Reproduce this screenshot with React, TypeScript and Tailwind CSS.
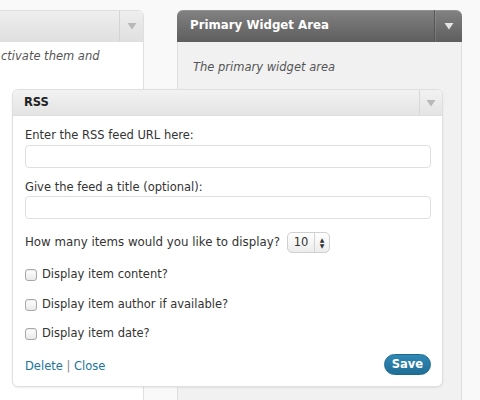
import React from "react";

function Arrow({ light }: { light?: boolean }) {
  return (
    <svg width="10" height="8" viewBox="0 0 10 8" className="block">
      <path d="M0.5 1 L9.5 1 L5 7.5 Z" fill={light ? "#e4e4e4" : "#b8b8b8"} />
    </svg>
  );
}

function Check({ label }: { label: string }) {
  return (
    <div className="flex h-[16px] items-center gap-[5px]">
      <span className="block h-[12px] w-[12px] rounded-[3px] border border-[#a9a9a9] bg-gradient-to-b from-white to-[#e9e9e9] shadow-[inset_0_1px_1px_rgba(0,0,0,0.08)]" />
      <span>{label}</span>
    </div>
  );
}

export default function App() {
  return (
    <div
      className="relative h-[400px] w-[480px] overflow-hidden bg-[#f9f9f9] text-[11.5px] text-[#333]"
      style={{ fontFamily: '"DejaVu Sans", "Liberation Sans", sans-serif' }}
    >
      <div className="flex pt-[10px]">
        {/* available widgets column (cut off on the left) */}
        <div className="-ml-[20px] flex h-[400px] w-[164px] flex-col rounded-tr-[6px] border border-[#dfdfdf] bg-white">
          <div className="flex h-[31px] items-stretch rounded-tr-[6px] border-b border-[#dfdfdf] bg-gradient-to-b from-[#eeeeee] to-[#e0e0e0]">
            <div className="flex-1" />
            <div className="flex w-[24px] items-center justify-center border-l border-[#d4d4d4]">
              <Arrow />
            </div>
          </div>
          <p className="pl-[20px] pt-[6px] italic leading-[16px] text-[#555]">ctivate them and</p>
        </div>

        {/* primary widget area */}
        <div className="ml-[33px] flex h-[400px] w-[285px] flex-col rounded-t-[6px] border border-[#dfdfdf] bg-[#f1f1f1]">
          <div className="-mx-px -mt-px flex h-[32px] items-stretch rounded-t-[6px] bg-gradient-to-b from-[#828282] to-[#5e5e5e] shadow-[inset_0_1px_0_rgba(255,255,255,0.15)]">
            <div className="flex flex-1 items-center pl-[13px] text-[11.8px] font-bold text-white">Primary Widget Area</div>
            <div className="flex w-[28px] items-center justify-center border-l border-[#555] shadow-[inset_1px_0_0_rgba(255,255,255,0.12)]">
              <Arrow light />
            </div>
          </div>
          <p className="pl-[15px] pt-[17px] italic leading-[16px] text-[#555]">The primary widget area</p>
        </div>
      </div>

      {/* RSS widget being dragged */}
      <div className="absolute left-[12px] top-[89px] flex h-[298px] w-[431px] flex-col rounded-[6px] border border-[#dfdfdf] bg-white shadow-[0_1px_2px_rgba(0,0,0,0.08)]">
        <div className="flex h-[26px] items-stretch rounded-t-[6px] border-b border-[#dfdfdf] bg-gradient-to-b from-[#f2f2f2] to-[#e4e4e4]">
          <div className="flex flex-1 items-center pl-[11px] font-bold text-[#222]">RSS</div>
          <div className="flex w-[23px] items-center justify-center border-l border-[#d8d8d8]">
            <Arrow />
          </div>
        </div>
        <div className="flex flex-1 flex-col pl-[12px] pr-[11px] pt-[11px]">
          <div className="leading-[16px]">Enter the RSS feed URL here:</div>
          <div className="mt-[2px] h-[23px] rounded-[4px] border border-[#dfdfdf] bg-white" />
          <div className="mt-[11px] leading-[16px]">Give the feed a title (optional):</div>
          <div className="mt-[1px] h-[23px] rounded-[4px] border border-[#dfdfdf] bg-white" />
          <div className="mt-[13px] flex items-center gap-[7px]">
            <span className="text-[11.8px]">How many items would you like to display?</span>
            <div className="flex h-[21px] w-[43px] items-stretch rounded-[5px] border border-[#cfcfcf] bg-gradient-to-b from-white to-[#ececec]">
              <span className="flex flex-1 items-center justify-center">10</span>
              <span className="flex w-[15px] flex-col items-center justify-center border-l border-[#d4d4d4] text-[6px] leading-[6px] text-[#333]">
                <span>▲</span>
                <span>▼</span>
              </span>
            </div>
          </div>
          <div className="mt-[14px] flex flex-col gap-[13.5px]">
            <Check label="Display item content?" />
            <Check label="Display item author if available?" />
            <Check label="Display item date?" />
          </div>
          <div className="mt-[12px] flex items-center justify-between">
            <div className="pt-[4px] text-[#21759b]">
              Delete <span className="text-[#888]">|</span> Close
            </div>
            <button className="h-[21px] rounded-full border border-[#1e6a8d] bg-gradient-to-b from-[#3088b6] to-[#1f6e96] px-[7px] text-[11.5px] font-bold text-white">
              Save
            </button>
          </div>
        </div>
      </div>
    </div>
  );
}
